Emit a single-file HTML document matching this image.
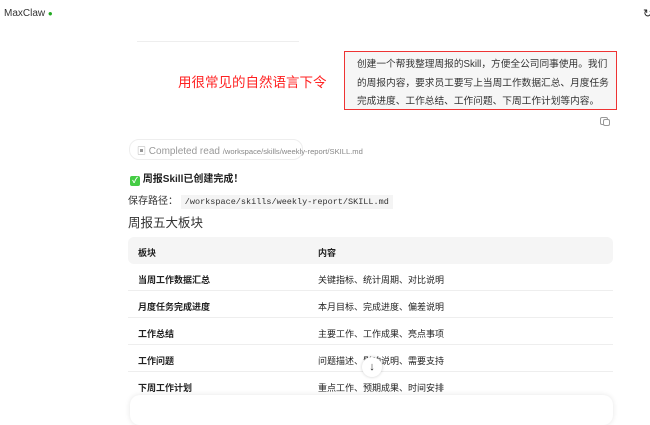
<!DOCTYPE html><html><head><meta charset="utf-8"><style>
*{margin:0;padding:0;box-sizing:border-box}
body{width:650px;height:411px;overflow:hidden;background:#fff;font-family:"Liberation Sans","Noto Sans CJK SC",sans-serif;color:#222;position:relative}
.a{position:absolute;white-space:nowrap}
.row{position:absolute;left:128px;width:485px;height:27px;border-bottom:1px solid #eee;font-size:9px}
.row span{position:absolute;top:9px}
</style></head><body>
<div class="a" style="left:4px;top:8px;font-size:10px;color:#333">MaxClaw <span style="color:#2a2;font-size:8px">●</span></div>
<div class="a" style="left:643px;top:7px;font-size:11px">↻</div>
<div class="a" style="left:137px;top:41px;width:162px;height:1px;background:#eee"></div>
<div class="a" style="left:178px;top:71px;font-size:13.5px;color:#f22">用很常见的自然语言下令</div>
<div class="a" style="left:344px;top:51px;width:273px;height:59px;border:1.5px solid #e33;background:#f6f6f6;padding:4px 0 0 12px;font-size:9.7px;line-height:18.5px;color:#333">创建一个帮我整理周报的Skill，方便全公司同事使用。我们<br>的周报内容，要求员工要写上当周工作数据汇总、月度任务<br>完成进度、工作总结、工作问题、下周工作计划等内容。</div>
<div class="a" style="left:600px;top:117px;width:8px;height:8px;border:1px solid #999;border-radius:2px"></div>
<div class="a" style="left:603px;top:119px;width:7px;height:7px;border:1px solid #999;border-radius:2px;background:#fff"></div>
<div class="a" style="left:129px;top:139px;width:174px;height:21px;border:1px solid #eee;border-radius:10px;font-size:10px;color:#999;padding:4px 0 0 7px"><span style="font-size:9px">▣</span> Completed read <span style="font-size:7.6px;color:#888">/workspace/skills/weekly-report/SKILL.md</span></div>
<div class="a" style="left:130px;top:170px;font-size:10px;font-weight:bold"><span style="display:inline-block;width:10px;height:10px;background:#4c4;color:#fff;font-size:8px;text-align:center;line-height:10px;border-radius:2px;vertical-align:-1px">✓</span> 周报Skill已创建完成！</div>
<div class="a" style="left:128px;top:192px;font-size:10px;color:#333">保存路径： <span style="font-family:'Liberation Mono',monospace;font-size:8.5px;background:#f4f4f4;padding:2px 4px">/workspace/skills/weekly-report/SKILL.md</span></div>
<div class="a" style="left:128px;top:212px;font-size:12.5px;color:#333">周报五大板块</div>
<div class="row" style="top:237px;background:#f5f5f5;border-radius:6px;border:none;font-weight:bold"><span style="left:10px">板块</span><span style="left:190px">内容</span></div>
<div class="row" style="top:264px"><span style="left:10px;font-weight:bold">当周工作数据汇总</span><span style="left:190px">关键指标、统计周期、对比说明</span></div>
<div class="row" style="top:291px"><span style="left:10px;font-weight:bold">月度任务完成进度</span><span style="left:190px">本月目标、完成进度、偏差说明</span></div>
<div class="row" style="top:318px"><span style="left:10px;font-weight:bold">工作总结</span><span style="left:190px">主要工作、工作成果、亮点事项</span></div>
<div class="row" style="top:345px"><span style="left:10px;font-weight:bold">工作问题</span><span style="left:190px">问题描述、影响说明、需要支持</span></div>
<div class="row" style="top:372px;border:none"><span style="left:10px;font-weight:bold">下周工作计划</span><span style="left:190px">重点工作、预期成果、时间安排</span></div>
<div class="a" style="left:362px;top:357px;width:20px;height:20px;border-radius:50%;background:#fff;box-shadow:0 0 3px rgba(0,0,0,.2);text-align:center;font-size:11px;line-height:20px">↓</div>
<div class="a" style="left:130px;top:395px;width:483px;height:30px;border-radius:10px;background:#fff;box-shadow:0 0 6px rgba(0,0,0,.1)"></div>
</body></html>
